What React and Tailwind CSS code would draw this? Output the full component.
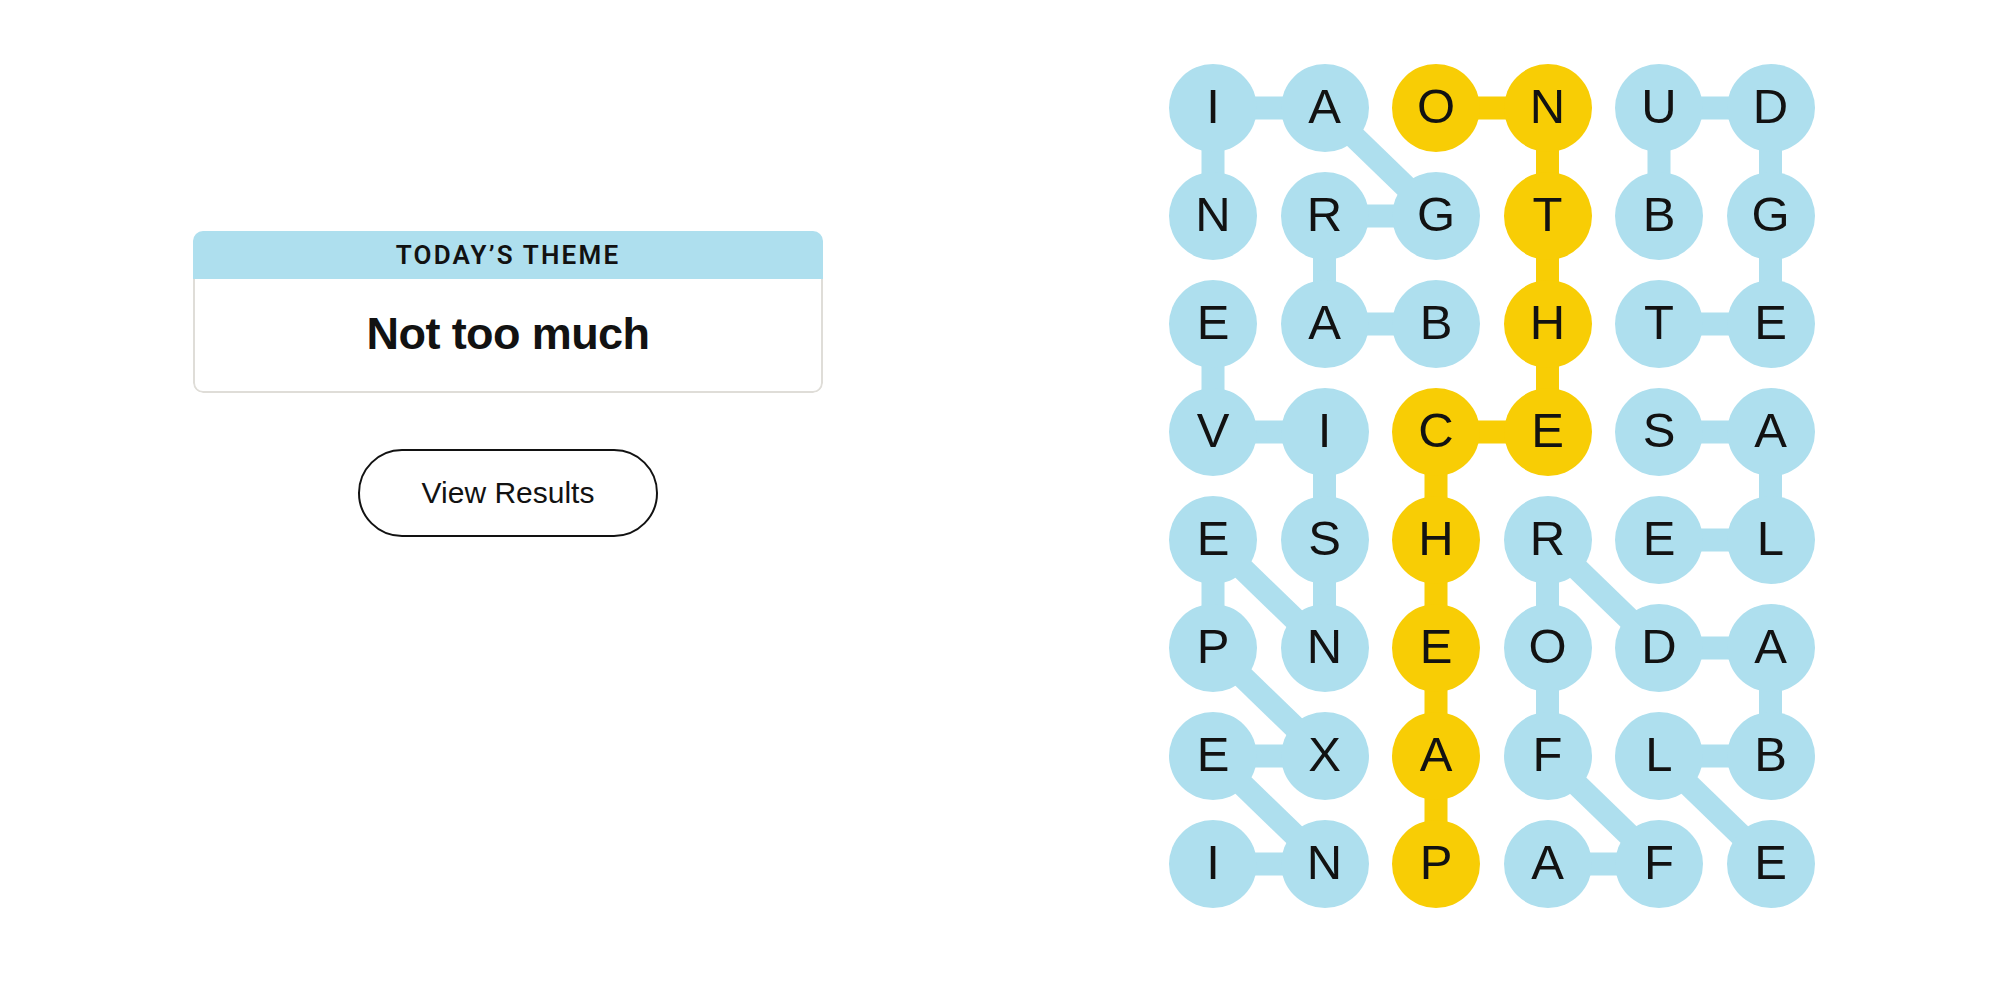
import React from 'react';

const BLUE = '#aedfee';
const YELLOW = '#f8cd05';

const rows = [
  'IAONUD',
  'NRGTBG',
  'EABHTE',
  'VICESA',
  'ESHREL',
  'PNEODA',
  'EXAFLB',
  'INPAFE',
];

// cells of the spangram, [row, col]
const spangram = [
  [0, 2], [0, 3], [1, 3], [2, 3], [3, 3], [3, 2], [4, 2], [5, 2], [6, 2], [7, 2],
];

// found words as paths of [row, col]
const words = [
  // BARGAIN
  [[2, 2], [2, 1], [1, 1], [1, 2], [0, 1], [0, 0], [1, 0]],
  // INEXPENSIVE
  [[7, 0], [7, 1], [6, 0], [6, 1], [5, 0], [4, 0], [5, 1], [4, 1], [3, 1], [3, 0], [2, 0]],
  // BUDGET
  [[1, 4], [0, 4], [0, 5], [1, 5], [2, 5], [2, 4]],
  // SALE
  [[3, 4], [3, 5], [4, 5], [4, 4]],
  // AFFORDABLE
  [[7, 3], [7, 4], [6, 3], [5, 3], [4, 3], [5, 4], [5, 5], [6, 5], [6, 4], [7, 5]],
];

const CELL = 88;
const PITCH_X = 111.5;
const PITCH_Y = 108;

const cx = (c) => CELL / 2 + c * PITCH_X;
const cy = (r) => CELL / 2 + r * PITCH_Y;

const isSpangram = (r, c) => spangram.some(([sr, sc]) => sr === r && sc === c);

const Connectors = ({ path, color }) => (
  <>
    {path.slice(1).map(([r, c], i) => {
      const [pr, pc] = path[i];
      return (
        <line
          key={`${r}-${c}-${i}`}
          x1={cx(pc)}
          y1={cy(pr)}
          x2={cx(c)}
          y2={cy(r)}
          stroke={color}
          strokeWidth="23"
        />
      );
    })}
  </>
);

const Board = () => (
  <div className="relative w-[646px] h-[844px]">
    {/* connector lines sit behind the letter circles */}
    <svg className="absolute inset-0" width="646" height="844" viewBox="0 0 646 844">
      {words.map((w, i) => (
        <Connectors key={i} path={w} color={BLUE} />
      ))}
      <Connectors path={spangram} color={YELLOW} />
    </svg>
    <div className="relative grid grid-cols-[repeat(6,88px)] gap-x-[23.5px] gap-y-[20px]">
      {rows.map((row, r) =>
        row.split('').map((letter, c) => (
          <div
            key={`${r}-${c}`}
            className={`w-[88px] h-[88px] rounded-full flex items-center justify-center text-[49px] leading-none text-[#121212] ${
              isSpangram(r, c) ? 'bg-[#f8cd05]' : 'bg-[#aedfee]'
            }`}
          >
            <span className="-mt-[4px]">{letter}</span>
          </div>
        ))
      )}
    </div>
  </div>
);

export default function App() {
  return (
    <div className="flex w-[2010px] h-[992px] bg-white font-['Liberation_Sans',Arial,sans-serif] text-[#121212]">
      {/* Left: theme card + results */}
      <div className="w-[823px] shrink-0 pl-[193px] pt-[231px]">
        <div className="w-[630px] flex flex-col items-center">
          <div className="w-full rounded-[10px] overflow-hidden">
            <div className="h-[48px] bg-[#aedfee] flex items-center justify-center">
              <span className="font-['Roboto',sans-serif] font-semibold text-[26px] tracking-[2.2px] leading-none">
                TODAY’S THEME
              </span>
            </div>
            <div className="h-[114px] pb-[4px] border-x-2 border-b-2 border-[#dfddd8] rounded-b-[10px] flex items-center justify-center">
              <span className="font-bold text-[45px] tracking-[-0.6px] leading-none">Not too much</span>
            </div>
          </div>
          <button className="mt-[56px] w-[300px] h-[88px] rounded-full border-2 border-[#121212] bg-white flex items-center justify-center">
            <span className="text-[30px] leading-none">View Results</span>
          </button>
        </div>
      </div>

      {/* Right: letter board */}
      <div className="pl-[346px] pt-[64px]">
        <Board />
      </div>
    </div>
  );
}
